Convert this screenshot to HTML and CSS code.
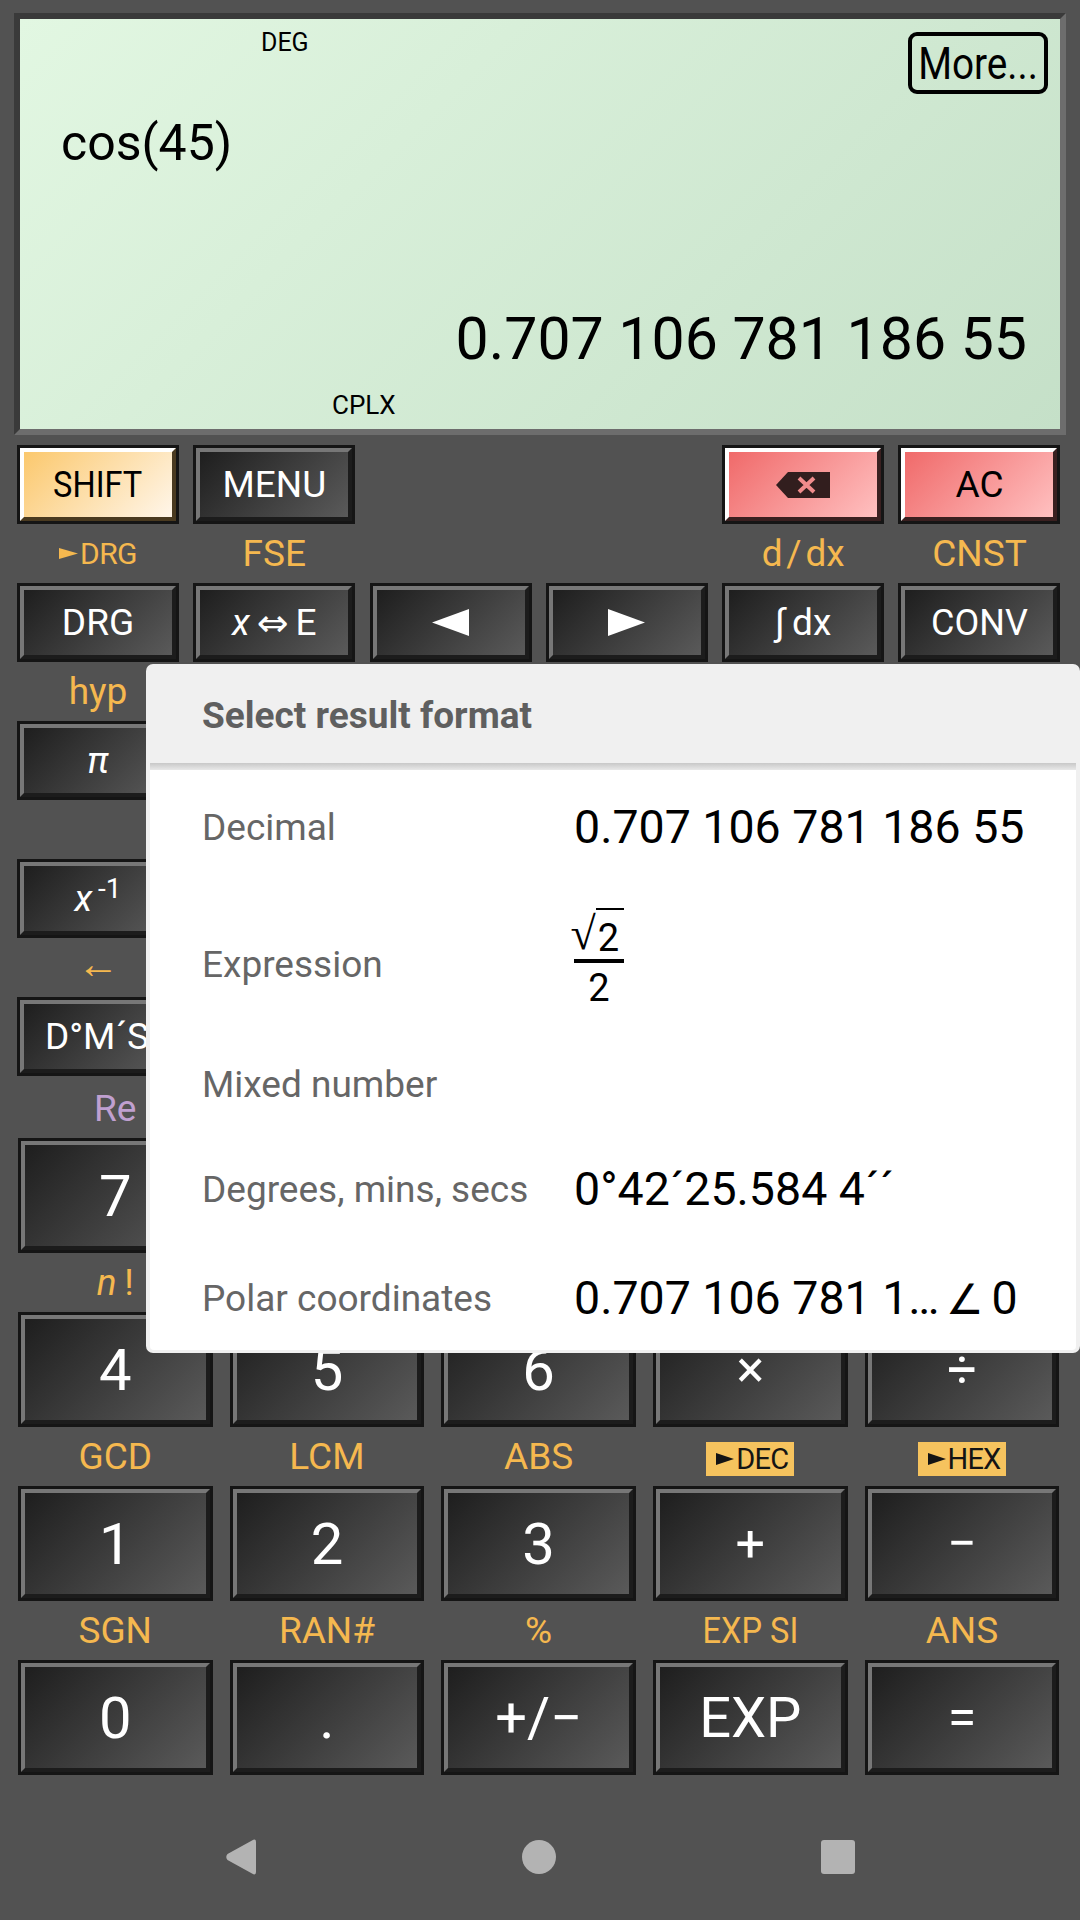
FILE: index.html
```html
<!DOCTYPE html>
<html lang="en">
<head>
  <meta charset="UTF-8">
  <title>Calculator</title>
  <link rel="stylesheet" href="styles.css">
</head>
<body>
  <div class="app">
    <div class="screen">
      <div class="screen-top">
        <span class="flag flag-deg">DEG</span>
        <span class="more"><span class="narrow">More...</span></span>
      </div>
      <div class="expr">cos(45)</div>
      <div class="result">0.707 106 781 186 55</div>
      <div class="flag flag-cplx">CPLX</div>
    </div>

    <div class="keys-small">
      <div class="cell"><div class="key key-shift"><span class="narrow">SHIFT</span></div></div>
      <div class="cell"><div class="key">MENU</div></div>
      <div class="cell"></div>
      <div class="cell"></div>
      <div class="cell">
        <div class="key key-red">
          <svg class="bksp" width="54" height="26" viewBox="0 0 54 26">
            <path d="M12 0H54V26H12L0 13Z" fill="#321e1e"/>
            <path d="M23 6L38 20M38 6L23 20" stroke="#f08c8c" stroke-width="4" fill="none"/>
          </svg>
        </div>
      </div>
      <div class="cell"><div class="key key-red">AC</div></div>

      <div class="cell">
        <div class="lbl lbl-sm">
          <svg class="arw" width="19" height="11" viewBox="0 0 19 11"><path d="M0 0L19 5.5L0 11Z" fill="#f5b84f"/></svg>DRG
        </div>
        <div class="key">DRG</div>
      </div>
      <div class="cell"><div class="lbl">FSE</div><div class="key"><i>x</i><span class="swap">⇔</span>E</div></div>
      <div class="cell"><div class="lbl"></div>
        <div class="key">
          <svg width="37" height="27" viewBox="0 0 37 27"><path d="M37 0V27L0 13.5Z" fill="#fff"/></svg>
        </div>
      </div>
      <div class="cell"><div class="lbl"></div>
        <div class="key">
          <svg width="37" height="27" viewBox="0 0 37 27"><path d="M0 0V27L37 13.5Z" fill="#fff"/></svg>
        </div>
      </div>
      <div class="cell"><div class="lbl">d&#8202;/&#8202;dx</div><div class="key">∫&#8201;dx</div></div>
      <div class="cell"><div class="lbl">CNST</div><div class="key"><span class="key-conv">CONV</span></div></div>

      <div class="cell"><div class="lbl">hyp</div><div class="key"><i>π</i></div></div>
      <div class="cell"><div class="lbl"></div><div class="key"></div></div>
      <div class="cell"><div class="lbl"></div><div class="key"></div></div>
      <div class="cell"><div class="lbl"></div><div class="key"></div></div>
      <div class="cell"><div class="lbl"></div><div class="key"></div></div>
      <div class="cell"><div class="lbl"></div><div class="key"></div></div>

      <div class="cell"><div class="lbl"></div><div class="key"><span><i>x</i><sup>&#8201;-1</sup></span></div></div>
      <div class="cell"><div class="lbl"></div><div class="key"></div></div>
      <div class="cell"><div class="lbl"></div><div class="key"></div></div>
      <div class="cell"><div class="lbl"></div><div class="key"></div></div>
      <div class="cell"><div class="lbl"></div><div class="key"></div></div>
      <div class="cell"><div class="lbl"></div><div class="key"></div></div>

      <div class="cell"><div class="lbl lbl-arrow">←</div><div class="key key-dms">D°M´S</div></div>
      <div class="cell"><div class="lbl"></div><div class="key"></div></div>
      <div class="cell"><div class="lbl"></div><div class="key"></div></div>
      <div class="cell"><div class="lbl"></div><div class="key"></div></div>
      <div class="cell"><div class="lbl"></div><div class="key"></div></div>
      <div class="cell"><div class="lbl"></div><div class="key"></div></div>
    </div>

    <div class="keys-big">
      <div class="cell"><div class="lbl lbl-re">Re</div><div class="key">7</div></div>
      <div class="cell"><div class="lbl"></div><div class="key"></div></div>
      <div class="cell"><div class="lbl"></div><div class="key"></div></div>
      <div class="cell"><div class="lbl"></div><div class="key"></div></div>
      <div class="cell"><div class="lbl"></div><div class="key"></div></div>

      <div class="cell"><div class="lbl"><i>n</i>&#8201;!</div><div class="key">4</div></div>
      <div class="cell"><div class="lbl"></div><div class="key">5</div></div>
      <div class="cell"><div class="lbl"></div><div class="key">6</div></div>
      <div class="cell"><div class="lbl"></div><div class="key key-op">×</div></div>
      <div class="cell"><div class="lbl"></div><div class="key key-op">÷</div></div>

      <div class="cell"><div class="lbl">GCD</div><div class="key">1</div></div>
      <div class="cell"><div class="lbl">LCM</div><div class="key">2</div></div>
      <div class="cell"><div class="lbl">ABS</div><div class="key">3</div></div>
      <div class="cell">
        <div class="lbl">
          <span class="tag"><svg class="arw" width="18" height="12" viewBox="0 0 18 12"><path d="M0 0L18 6L0 12Z" fill="#141414"/></svg>DEC</span>
        </div>
        <div class="key key-op">+</div>
      </div>
      <div class="cell">
        <div class="lbl">
          <span class="tag"><svg class="arw" width="18" height="12" viewBox="0 0 18 12"><path d="M0 0L18 6L0 12Z" fill="#141414"/></svg>HEX</span>
        </div>
        <div class="key key-op">−</div>
      </div>

      <div class="cell"><div class="lbl">SGN</div><div class="key">0</div></div>
      <div class="cell"><div class="lbl">RAN#</div><div class="key">.</div></div>
      <div class="cell"><div class="lbl">%</div><div class="key key-mid">+/−</div></div>
      <div class="cell"><div class="lbl"><span class="narrow">EXP SI</span></div><div class="key key-exp">EXP</div></div>
      <div class="cell"><div class="lbl">ANS</div><div class="key key-op">=</div></div>
    </div>

    <div class="nav">
      <svg width="30" height="36" viewBox="0 0 30 36"><path d="M26 1.5Q30 -1 30 3V33Q30 37 26 34.5L1.5 21Q-1 18 1.5 15Z" fill="#b3b3b3"/></svg>
      <svg width="34" height="34" viewBox="0 0 34 34"><circle cx="17" cy="17" r="17" fill="#b3b3b3"/></svg>
      <svg width="34" height="34" viewBox="0 0 34 34"><rect width="34" height="34" rx="3" fill="#b3b3b3"/></svg>
    </div>
  </div>

  <!-- Result format dialog -->
  <div class="dialog">
    <div class="dialog-title">Select result format</div>
    <div class="dialog-body">
      <div class="opt">Decimal</div>
      <div class="val">0.707 106 781 186 55</div>
      <div class="opt">Expression</div>
      <div class="val">
        <div class="frac">
          <div class="frac-top"><span class="root">√</span><span class="radicand">2</span></div>
          <div class="frac-bot">2</div>
        </div>
      </div>
      <div class="opt">Mixed number</div>
      <div class="val"></div>
      <div class="opt">Degrees, mins, secs</div>
      <div class="val">0°42´25.584 4´´</div>
      <div class="opt">Polar coordinates</div>
      <div class="val">0.707 106 781 1…<span class="angle">∠</span>0</div>
    </div>
  </div>
</body>
</html>
```
FILE: styles.css
```css
* {
  box-sizing: border-box;
}

body {
  margin: 0;
  width: 1080px;
  height: 1920px;
  overflow: hidden;
  position: relative;
  background-color: #525252;
  font-family: Roboto, sans-serif;
}

.app {
  padding-top: 13px;
}

/* LCD display */
.screen {
  width: 1052px;
  height: 422px;
  margin-left: 14px;
  border: 6px solid;
  border-color: #3a3a3a #6d6d6d #6d6d6d #3a3a3a;
  background: linear-gradient(135deg, #e2f7e2, #c5e0c8);
  color: #000;
}

.screen-top {
  display: flex;
  justify-content: space-between;
  align-items: flex-start;
  height: 62px;
  margin-top: 13px;
  padding: 0 12px 0 241px;
}

.flag {
  font-size: 25px;
  line-height: 28px;
}

.flag-deg {
  margin-top: -3px;
}

.flag-cplx {
  margin: 17px 0 0 312px;
  font-size: 26px;
}

.more {
  display: flex;
  justify-content: center;
  width: 140px;
  height: 62px;
  border: 4px solid #000;
  border-radius: 9px;
  font-size: 44px;
  line-height: 56px;
}

.narrow {
  display: inline-block;
  transform: scaleX(0.88);
  white-space: nowrap;
}

.expr {
  margin: 19px 0 0 41px;
  font-size: 50px;
  line-height: 60px;
}

.result {
  margin-top: 131px;
  padding-right: 33px;
  font-size: 59px;
  line-height: 70px;
  text-align: right;
}

/* Keyboard */
.keys-small {
  display: grid;
  grid-template-columns: repeat(6, 162px);
  column-gap: 14.3px;
  padding-left: 17px;
  margin-top: 10px;
}

.keys-big {
  display: grid;
  grid-template-columns: repeat(5, 194.5px);
  column-gap: 17.2px;
  padding-left: 18px;
  margin-top: 3px;
}

.cell {
  display: flex;
  flex-direction: column;
}

.lbl {
  height: 59px;
  display: flex;
  align-items: center;
  justify-content: center;
  color: #f5b84f;
  font-size: 37px;
  white-space: nowrap;
}

.lbl-sm {
  font-size: 30px;
  letter-spacing: -0.5px;
}

.lbl-re {
  color: #c0a0d0;
}

.lbl-arrow {
  padding-bottom: 8px;
  font-size: 42px;
}

.arw {
  margin-right: 2px;
}

.tag {
  display: flex;
  align-items: center;
  margin-top: 4px;
  padding: 0 6px 0 10px;
  background-color: #f6c35e;
  color: #141414;
  font-size: 29px;
  letter-spacing: -0.8px;
  line-height: 34px;
}

.key {
  display: flex;
  align-items: center;
  justify-content: center;
  height: 73px;
  margin: 3px;
  border: 4px solid;
  border-color: #777 #1c1c1c #1c1c1c #777;
  background: linear-gradient(135deg, #1e1e1e, #5a5a5a);
  box-shadow: 0 0 0 3px #151515;
  color: #fff;
  font-size: 37px;
  white-space: nowrap;
}

.key-conv {
  font-size: 36px;
}

.keys-big .key {
  height: 109px;
  font-size: 58px;
}

.keys-big .key-op {
  font-size: 52px;
}

.keys-big .key-mid {
  font-size: 56px;
}

.keys-big .key-exp {
  font-size: 56px;
}

.key sup {
  font-size: 28px;
  line-height: 0;
}

.swap {
  margin: 0 7px;
  font-family: "DejaVu Sans", sans-serif;
  font-size: 38px;
}

.key-shift {
  border-color: #fff #4a3a20 #4a3a20 #fff;
  background: linear-gradient(135deg, #fbc86d, #fff6ea);
  color: #000;
}

.key-red {
  border-color: #fff #3a2020 #3a2020 #fff;
  background: linear-gradient(135deg, #f06a6a, #ffc0c0);
  color: #000;
}

.key-dms {
  justify-content: flex-start;
  padding-left: 21px;
}

.bksp {
  display: block;
}

/* System nav bar */
.nav {
  display: flex;
  justify-content: space-between;
  align-items: center;
  margin-top: 64px;
  padding: 0 225px 0 226px;
}

.nav svg {
  display: block;
}

/* Dialog over the keyboard */
.dialog {
  position: absolute;
  left: 146px;
  top: 664px;
  width: 934px;
  height: 689px;
  padding: 0 4px 3px;
  border-radius: 7px;
  background-color: #f0f0f0;
  color: #000;
}

.dialog-title {
  height: 99px;
  padding-left: 52px;
  color: #5f5f5f;
  font-size: 37px;
  font-weight: 700;
  line-height: 103px;
}

.dialog-body {
  display: grid;
  grid-template-columns: 372px 1fr;
  grid-template-rows: 114px 160px 80px 130px 88px;
  align-items: center;
  height: 587px;
  padding: 7px 0 0 52px;
  background: linear-gradient(#c8c8c8, #e8e8e8 7px, #fff 7px);
  border-radius: 0 0 4px 4px;
}

.opt {
  color: #666;
  font-size: 37px;
}

.val {
  font-size: 46.5px;
  white-space: nowrap;
}

.angle {
  margin: 0 7px 0 7px;
  font-family: "Liberation Sans", sans-serif;
  font-size: 42px;
}

.frac {
  width: 50px;
  margin-bottom: 12px;
  text-align: center;
  font-size: 38px;
  line-height: 40px;
}

.frac-top {
  display: flex;
  justify-content: flex-end;
  height: 55px;
  border-bottom: 4px solid #000;
}

.root {
  font-family: "Liberation Serif", serif;
  font-size: 46px;
  line-height: 52px;
}

.radicand {
  height: 51px;
  padding: 8px 5px 0 2px;
  border-top: 2px solid #000;
}

.frac-bot {
  margin-top: 5px;
}
```
